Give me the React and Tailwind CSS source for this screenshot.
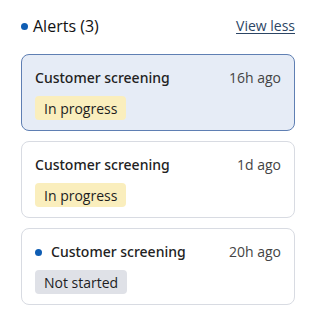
export default function App() {
  const font = { fontFamily: '"Open Sans", "Noto Sans", sans-serif' };
  return (
    <div className="w-[316px] h-[332px] bg-white px-[21px] pt-[14px] text-[#1d1d1f]" style={font}>
      <div className="flex items-center justify-between h-[24px]">
        <div className="flex items-center gap-[5px]">
          <span className="block w-[7px] h-[7px] rounded-full bg-[#0f5db3]" />
          <span className="text-[16px] leading-[24px] text-[#111]">Alerts (3)</span>
        </div>
        <a className="text-[14px] leading-[20px] text-[#2c4564] underline underline-offset-2">View less</a>
      </div>
      <div className="mt-[16px] flex flex-col gap-[10px]">
        <Card active time="16h ago" badge="In progress" badgeCls="bg-[#faeebd]" />
        <Card time="1d ago" badge="In progress" badgeCls="bg-[#faeebd]" />
        <Card dot time="20h ago" badge="Not started" badgeCls="bg-[#dfe1e7]" />
      </div>
    </div>
  );
}

function Card({ active, dot, time, badge, badgeCls }) {
  return (
    <div
      className={
        "h-[77px] rounded-[8px] border px-[13px] pt-[13px] " +
        (active ? "bg-[#e6ecf6] border-[#5f7fb3]" : "bg-white border-[#d8dbe2]")
      }
    >
      <div className="flex items-center justify-between h-[20px]">
        <div className="flex items-center gap-[9px]">
          {dot && <span className="block w-[7px] h-[7px] rounded-full bg-[#0f5db3]" />}
          <span className="text-[14px] leading-[20px] font-medium text-[#222]" style={{ fontFamily: '"Noto Sans", "Open Sans", sans-serif' }}>Customer screening</span>
        </div>
        <span className="text-[14px] leading-[20px] text-[#444]">{time}</span>
      </div>
      <div className="mt-[8px] flex">
        <span className={"rounded-[4px] px-[9px] h-[24px] flex items-center text-[14px] text-[#1d1d1f] " + badgeCls}>
          {badge}
        </span>
      </div>
    </div>
  );
}
